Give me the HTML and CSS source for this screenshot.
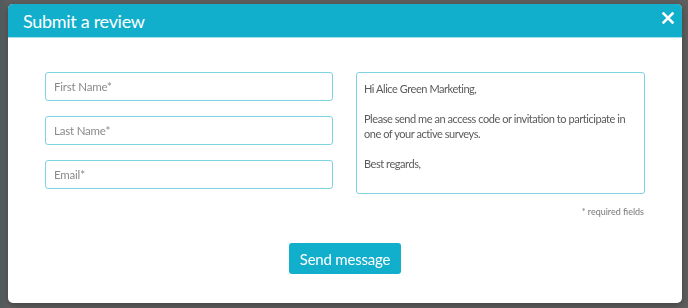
FILE: index.html
```html
<!DOCTYPE html>
<html lang="en">
<head>
    <meta charset="UTF-8">
    <meta name="viewport" content="width=device-width, initial-scale=1.0">
    <title>Submit a review</title>
    <link rel="stylesheet" href="styles.css">
</head>
<body>
    <div class="backdrop"></div>

    <div class="modal">
        <div class="modal-header">
            <h1 class="modal-title">Submit a review</h1>
            <button class="close" aria-label="Close">
                <svg width="12" height="12" viewBox="0 0 12 12">
                    <path d="M1.5 1.5 L10.5 10.5 M10.5 1.5 L1.5 10.5" stroke="#fff" stroke-width="2.6" stroke-linecap="square"/>
                </svg>
            </button>
        </div>

        <div class="modal-body">
            <div class="form-grid">
                <div class="fields">
                    <input class="field" type="text" placeholder="First Name*">
                    <input class="field" type="text" placeholder="Last Name*">
                    <input class="field" type="email" placeholder="Email*">
                </div>
                <div class="message">Hi Alice Green Marketing,<br><br>Please send me an access code or invitation to participate in one of your active surveys.<br><br>Best regards,</div>
            </div>
            <div class="required">* required fields</div>
            <div class="actions">
                <button class="btn">Send message</button>
            </div>
        </div>
    </div>
</body>
</html>
```

FILE: styles.css
```css
body {
    margin: 0;
    font-family: 'Lato', 'Open Sans', sans-serif;
    background: #5e5e5e;
    width: 688px;
    height: 308px;
    overflow: hidden;
}

.backdrop {
    height: 308px;
    background: linear-gradient(90deg, #4f5a5e 0, #5e5e5e 8px);
}

.modal {
    position: fixed;
    top: 4px;
    left: 8px;
    width: 674px;
    height: 299px;
    background: white;
    border-radius: 5px;
    overflow: hidden;
    box-shadow: 0 2px 6px rgba(0,0,0,0.3);
}

.modal-header {
    background: #12afcc;
    height: 33px;
    display: flex;
    align-items: center;
    justify-content: space-between;
    padding: 0 8px 0 15px;
    border-bottom: 1px solid #a6e1ec;
}

.modal-title {
    margin: 0;
    color: white;
    font-size: 18px;
    font-weight: 400;
    letter-spacing: -0.3px;
}

.close {
    background: none;
    border: none;
    padding: 0;
    margin-top: -6px;
    cursor: pointer;
    display: flex;
}

.modal-body {
    padding: 34px 37px 0 37px;
}

.form-grid {
    display: grid;
    grid-template-columns: 288px 289px;
    gap: 23px;
}

.fields {
    display: flex;
    flex-direction: column;
    gap: 15px;
}

.field {
    height: 29px;
    box-sizing: border-box;
    border: 1px solid #7ed2e2;
    border-radius: 3px;
    padding: 0 8px;
    font-family: inherit;
    font-size: 11.5px;
    letter-spacing: -0.2px;
    color: #555;
}

.field::placeholder {
    color: #8a8a8a;
}

.message {
    height: 122px;
    box-sizing: border-box;
    border: 1px solid #7ed2e2;
    border-radius: 3px;
    padding: 8px 6px 8px 7px;
    font-size: 11px;
    letter-spacing: -0.45px;
    line-height: 15px;
    color: #5a5a5a;
}

.required {
    text-align: right;
    font-size: 9px;
    color: #777;
    margin-top: 12px;
    padding-right: 1px;
}

.actions {
    display: flex;
    justify-content: center;
    margin-top: 26px;
}

.btn {
    background: #12afcc;
    color: white;
    border: none;
    border-radius: 3px;
    width: 112px;
    height: 31px;
    font-family: inherit;
    font-size: 15px;
    letter-spacing: -0.2px;
    cursor: pointer;
}
```
